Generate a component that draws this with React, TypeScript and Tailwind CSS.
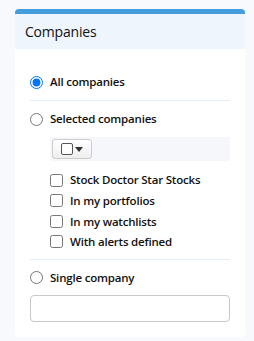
export default function App() {
  const filters = [
    "Stock Doctor Star Stocks",
    "In my portfolios",
    "In my watchlists",
    "With alerts defined",
  ];

  return (
    <div
      className="min-h-screen bg-[#f7f9fc] pt-[9px] px-[15px]"
      style={{ fontFamily: '"Open Sans", "Noto Sans", sans-serif' }}
    >
      <div className="w-[230px] bg-white rounded-[4px] border-t-[5px] border-[#449ddc] overflow-hidden">
        <div className="h-[35px] bg-[#eef5fd] px-[10px] flex items-center">
          <h2 className="text-[14px] tracking-[-0.2px] text-[#111] leading-none">Companies</h2>
        </div>

        <div className="px-[15px] pt-[23px] pb-[15px]">
          <label className="flex items-center gap-[7px] h-[20px]">
            <input type="radio" name="company" defaultChecked className="m-0 w-[13px] h-[13px]" />
            <span className="text-[11.5px] tracking-[-0.2px] font-semibold text-[#111]">All companies</span>
          </label>

          <div className="border-t border-[#e3eef9] mt-[8px] mb-[9px]" />

          <label className="flex items-center gap-[7px] h-[18px]">
            <input type="radio" name="company" className="m-0 w-[13px] h-[13px]" />
            <span className="text-[11.5px] tracking-[-0.2px] font-semibold text-[#111]">Selected companies</span>
          </label>

          <div className="ml-[20px] mt-[9px] bg-[#f5f7fa] h-[24px] flex items-center px-[2px]">
            <button className="h-[20px] w-[40px] flex items-center justify-center gap-[2px] rounded-[3px] border border-[#ccc] bg-gradient-to-b from-white to-[#eeeeee]">
              <span className="w-[12px] h-[12px] border border-[#555] rounded-[2px] bg-white" />
              <svg width="8" height="5" viewBox="0 0 8 5">
                <path d="M0 0h8L4 5z" fill="#333" />
              </svg>
            </button>
          </div>

          <div className="ml-[20px] mt-[12px] flex flex-col gap-[6.6px]">
            {filters.map((f) => (
              <label key={f} className="flex items-center gap-[7px] h-[14px]">
                <input type="checkbox" className="m-0 w-[13px] h-[13px]" />
                <span className="text-[11.5px] tracking-[-0.2px] font-semibold text-[#111]">{f}</span>
              </label>
            ))}
          </div>

          <div className="border-t border-[#e3eef9] mt-[10px] mb-[10px]" />

          <label className="flex items-center gap-[7px] h-[16px]">
            <input type="radio" name="company" className="m-0 w-[13px] h-[13px]" />
            <span className="text-[11.5px] tracking-[-0.2px] font-semibold text-[#111]">Single company</span>
          </label>

          <input
            type="text"
            className="mt-[9px] block w-full h-[27px] rounded-[4px] border border-[#c8c8c8] bg-white"
          />
        </div>
      </div>
    </div>
  );
}
